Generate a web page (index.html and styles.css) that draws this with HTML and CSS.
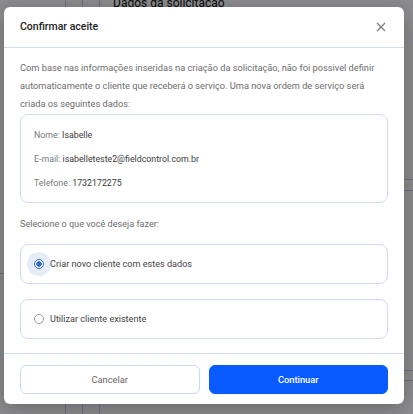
FILE: index.html
```html
<!DOCTYPE html>
<html lang="pt-BR">
<head>
<meta charset="utf-8">
<title>Confirmar aceite</title>
<link rel="stylesheet" href="styles.css">
</head>
<body>
<div class="page">
  <div class="gutter"><div class="gutter-line"></div></div>
  <div class="rail"></div>
  <div class="rail"></div>
  <div class="main">
    <div class="page-title">Dados da solicitação</div>
    <div class="row-a"></div>
    <div class="row-b"></div>
  </div>
</div>

<div class="backdrop">
  <div class="modal">
    <div class="modal-header">
      <span class="modal-title">Confirmar aceite</span>
      <svg class="close" width="10" height="10" viewBox="0 0 10 10"><path d="M1 1L9 9M9 1L1 9" stroke="#7a7a7a" stroke-width="1.2" fill="none"/></svg>
    </div>
    <div class="modal-body">
      <p class="intro">Com base nas informações inseridas na criação da solicitação, não foi possivel definir automaticamente o cliente que receberá o serviço. Uma nova ordem de serviço será criada os seguintes dados:</p>
      <div class="info">
        <div class="info-row"><span class="lbl">Nome:</span> <span class="val">Isabelle</span></div>
        <div class="info-row"><span class="lbl">E-mail:</span> <span class="val">isabelleteste2@fieldcontrol.com.br</span></div>
        <div class="info-row"><span class="lbl">Telefone:</span> <span class="val">1732172275</span></div>
      </div>
      <p class="question">Selecione o que você deseja fazer:</p>
      <div class="option">
        <span class="radio-wrap selected"><span class="radio"></span></span>
        <span class="opt-label">Criar novo cliente com estes dados</span>
      </div>
      <div class="option second">
        <span class="radio-wrap"><span class="radio"></span></span>
        <span class="opt-label">Utilizar cliente existente</span>
      </div>
    </div>
    <div class="modal-footer">
      <button class="btn btn-cancel">Cancelar</button>
      <button class="btn btn-primary">Continuar</button>
    </div>
  </div>
</div>
</body>
</html>
```

FILE: styles.css
```css
* { box-sizing: border-box; }
html, body { margin: 0; padding: 0; }
body {
  width: 413px;
  height: 414px;
  overflow: hidden;
  font-family: Roboto, "Liberation Sans", sans-serif;
  background: #f6f7fa;
  position: relative;
}
.page {
  display: flex;
  height: 414px;
}
.gutter {
  width: 65px;
  padding-top: 273px;
}
.gutter-line {
  height: 8px;
  border-top: 1px solid #b9c6e6;
}
.rail {
  width: 17px;
  border-left: 1px solid #b9c6e6;
}
.main {
  flex: 1;
  border-left: 1px solid #b9c6e6;
  padding-left: 13px;
}
.page-title {
  margin-top: -4px;
  font-size: 12px;
  line-height: 14px;
  color: #111;
}
.row-a {
  margin-top: 169px;
  height: 12px;
  border-top: 1px solid #b9c6e6;
  border-bottom: 1px solid #b9c6e6;
}
.row-b {
  margin-top: 179px;
  height: 11px;
  border-top: 1px solid #b9c6e6;
  border-bottom: 1px solid #b9c6e6;
}
.backdrop {
  position: absolute;
  inset: 0;
  background: rgba(0, 0, 0, 0.42);
  padding: 7px 0 0 4px;
}
.modal {
  width: 400px;
  height: 397px;
  background: #fff;
  border-radius: 6px;
  box-shadow: 0 4px 24px rgba(0, 0, 0, 0.3);
  display: flex;
  flex-direction: column;
}
.modal-header {
  height: 41px;
  flex: none;
  border-bottom: 1px solid #d3def5;
  display: flex;
  align-items: center;
  justify-content: space-between;
  padding: 0 18px 1px 16px;
}
.modal-title {
  font-size: 10.5px;
  font-weight: 500;
  color: #222;
}
.close { display: block; }
.modal-body {
  padding: 11px 16px 0;
  height: 306px;
  flex: none;
  border-bottom: 1px solid #d3def5;
}
.intro {
  margin: 0;
  font-size: 9.25px;
  line-height: 18px;
  color: #6d6d6d;
}
.info {
  margin-top: 1px;
  border: 1px solid #cfdcf7;
  border-radius: 8px;
  padding: 8px 13px 7px;
}
.info-row {
  font-size: 8.8px;
  line-height: 24px;
}
.lbl { color: #7a7a7a; }
.val { color: #3a3a3a; }
.question {
  margin: 12px 0 0;
  font-size: 9.1px;
  line-height: 18px;
  color: #6d6d6d;
}
.option {
  margin-top: 11px;
  height: 40px;
  border: 1px solid #cfdcf7;
  border-radius: 8px;
  display: flex;
  align-items: center;
  padding-left: 6px;
}
.option.second { margin-top: 15px; }
.radio-wrap {
  width: 24px;
  height: 24px;
  border-radius: 50%;
  display: flex;
  align-items: center;
  justify-content: center;
  margin-right: -1px;
}
.radio {
  width: 10px;
  height: 10px;
  border-radius: 50%;
  border: 1.3px solid #9c9c9c;
  background: #fff;
}
.radio-wrap.selected { background: #e6edf9; }
.radio-wrap.selected .radio {
  border-color: #2e6bd6;
  background: radial-gradient(circle, #2e6bd6 0 2.5px, #fff 3px);
}
.opt-label {
  font-size: 9.1px;
  color: #444;
}
.modal-footer {
  flex: 1;
  display: flex;
  gap: 9px;
  padding: 11px 16px 10px;
}
.btn {
  flex: 1;
  height: 29px;
  border-radius: 6px;
  font-family: Roboto, "Liberation Sans", sans-serif;
  font-size: 9.3px;
  cursor: pointer;
}
.btn-cancel {
  background: #fff;
  border: 1px solid #c9d9f7;
  color: #666;
}
.btn-primary {
  background: #0a5bff;
  border: 1px solid #0a5bff;
  color: #fff;
  font-weight: 500;
}
```
